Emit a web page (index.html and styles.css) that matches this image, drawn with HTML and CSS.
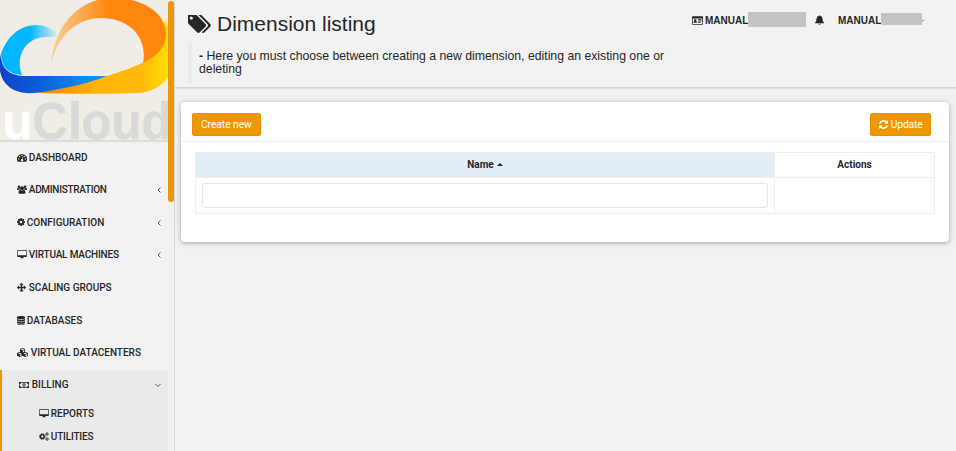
FILE: index.html
```html
<!DOCTYPE html>
<html lang="en">
<head>
<meta charset="utf-8">
<title>uCloud - Dimension listing</title>
<link rel="stylesheet" href="styles.css">
</head>
<body>
<svg class="defs" width="0" height="0">
  <symbol id="desktop" viewBox="0 0 1920 1792"><path d="M1792 992v-832q0-13-9.5-22.5t-22.5-9.500h-1600q-13 0-22.500 9.500t-9.500 22.500v832q0 13 9.500 22.500t22.500 9.500h1600q13 0 22.500-9.500t9.500-22.500zm128-832v1088q0 66-47 113t-113 47h-544q0 37 16 77.500t32 71 16 43.500q0 26-19 45t-45 19h-512q-26 0-45-19t-19-45q0-14 16-44t32-70 16-78h-544q-66 0-113-47t-47-113v-1088q0-66 47-113t113-47h1600q66 0 113 47t47 113z"/></symbol>
  <symbol id="cog" viewBox="128 128 1536 1536"><path d="M1152 896q0-106-75-181t-181-75-181 75-75 181 75 181 181 75 181-75 75-181zm512-109v222q0 12-8 23t-20 13l-185 28q-19 54-39 91 35 50 107 138 10 12 10 25t-9 23q-27 37-99 108t-94 71q-12 0-26-9l-138-108q-44 23-91 38-16 136-29 186-7 28-36 28h-222q-14 0-24.500-8.500t-11.500-21.500l-28-184q-49-16-90-37l-141 107q-10 9-25 9-14 0-25-11-126-114-165-168-7-10-7-23 0-12 8-23 15-21 51-66.500t54-70.500q-27-50-41-99l-183-27q-13-2-21-12.500t-8-23.500v-222q0-12 8-23t19-13l186-28q14-46 39-92-40-57-107-138-10-12-10-24 0-10 9-23 26-36 98.500-107.500t94.500-71.500q13 0 26 10l138 107q44-23 91-38 16-136 29-186 7-28 36-28h222q14 0 24.500 8.500t11.500 21.500l28 184q49 16 90 37l142-107q9-9 24-9 13 0 25 10 129 119 165 170 7 8 7 22 0 12-8 23-15 21-51 66.500t-54 70.500q26 50 41 98l183 28q13 2 21 12.500t8 23.500z"/></symbol>
  <symbol id="tags" viewBox="0 192 1835 1452"><path d="M384 448q0-53-37.500-90.500t-90.500-37.500-90.500 37.500-37.500 90.500 37.500 90.500 90.500 37.500 90.500-37.500 37.500-90.500zm1067 576q0 53-37 90l-491 492q-39 37-91 37-53 0-90-37l-715-716q-38-37-64.500-101t-26.500-117v-416q0-52 38-90t90-38h416q53 0 117 26.500t102 64.500l715 714q37 39 37 91zm384 0q0 53-37 90l-491 492q-39 37-91 37-36 0-59-14t-53-45l470-470q37-37 37-90 0-52-37-91l-715-714q-38-38-102-64.500t-117-26.500h224q53 0 117 26.500t102 64.500l715 714q37 39 37 91z"/></symbol>
  <symbol id="refresh" viewBox="128 128 1536 1536"><path d="M1639 1056q0 5-1 7-64 268-268 434.500t-478 166.500q-146 0-282.500-55t-243.500-157l-129 129q-19 19-45 19t-45-19-19-45v-448q0-26 19-45t45-19h448q26 0 45 19t19 45-19 45l-137 137q71 66 161 102t187 36q134 0 250-65t186-179q11-17 53-117 8-23 30-23h192q13 0 22.500 9.500t9.500 22.500zm25-800v448q0 26-19 45t-45 19h-448q-26 0-45-19t-19-45 19-45l138-138q-148-137-349-137-134 0-250 65t-186 179q-11 17-53 117-8 23-30 23h-199q-13 0-22.500-9.500t-9.500-22.500v-7q65-268 270-434.500t480-166.500q146 0 284 55.500t245 156.500l130-129q19-19 45-19t45 19 19 45z"/></symbol>
  <symbol id="gauge" viewBox="0 0 18 15"><path fill-rule="evenodd" d="M9 1a9 9 0 0 0-7.500 14h15A9 9 0 0 0 9 1zM3 8.700a1.200 1.200 0 1 0 .1 2.500 1.200 1.200 0 0 0-.1-2.500zM5 4.500a1.200 1.200 0 1 0 .1 2.500A1.200 1.200 0 0 0 5 4.500zM9 2.700a1.200 1.200 0 1 0 .1 2.500A1.200 1.200 0 0 0 9 2.700zM13 4.500a1.200 1.200 0 1 0 .1 2.500 1.200 1.200 0 0 0-.1-2.500zM15 8.700a1.200 1.200 0 1 0 .1 2.500 1.200 1.200 0 0 0-.1-2.500zM10.300 6l-1.100 4.300a2 2 0 1 0 1 .3l1.100-4.300z"/></symbol>
  <symbol id="users" viewBox="0 0 20 17"><circle cx="10" cy="6" r="4"/><circle cx="4" cy="3" r="2.600"/><circle cx="16" cy="3" r="2.600"/><path d="M6 9q-3 1-3 6 0 2 2.500 2h9q2.500 0 2.500-2 0-5-3-6-4 3-8 0zM0 8.500Q0 5 1.500 5q2 1.500 3.700.7Q5 8 6 9H3Q0 10 0 8.500zM20 8.500Q20 5 18.500 5q-2 1.500-3.700.7Q15 8 14 9h3q3 1 3-.5z"/></symbol>
  <symbol id="arrows" viewBox="0 0 18 18"><path d="M9 0l3.500 3.700H10V8h4.300V5.500L18 9l-3.700 3.500V10H10v4.300h2.500L9 18l-3.500-3.700H8V10H3.700v2.500L0 9l3.700-3.500V8H8V3.700H5.500z" stroke="currentColor" stroke-width=".8"/></symbol>
  <symbol id="database" viewBox="0 0 16 18"><path d="M0 2.500C0-.7 16-.7 16 2.500V4c0 3.300-16 3.300-16 0zM0 6q8 4 16 0v2.500c0 3.300-16 3.300-16 0zM0 10.500q8 4 16 0V13c0 3.300-16 3.300-16 0zM0 15q8 4 16 0v.5c0 3.300-16 3.300-16 0z"/></symbol>
  <symbol id="cubes" viewBox="0 0 22 18"><path fill-rule="evenodd" d="M11 0l5 2v5.500l6 2.500v5.500L16.500 18 11 15.700 5.500 18 0 15.500V10l6-2.500V2zM7.500 3l3.500 1.500L14.500 3 11 1.700zM11.700 5.700v3.200l3-1.300V4.400zM2 10.800l3.500 1.500L9 10.800 5.500 9.400zM6.200 13.500v3l3-1.300v-3.100zM13 10.800l3.500 1.500 3.500-1.500-3.500-1.400zM17.200 13.500v3l3-1.300v-3.100z"/></symbol>
  <symbol id="money" viewBox="0 0 20 14"><path fill-rule="evenodd" d="M0 1h20v12H0zM4 2.400a2.700 2.700 0 0 1-2.600 2.600v4A2.700 2.700 0 0 1 4 11.600h12A2.700 2.700 0 0 1 18.600 9V5A2.700 2.700 0 0 1 16 2.400z"/><path fill-rule="evenodd" d="M10 3c-4 0-4 8 0 8s4-8 0-8zm-.6 1.700h1.300v3.600h1v1H8.400v-1h1V6.200h-1z"/></symbol>
  <symbol id="cogs" viewBox="0 0 20 18"><g fill="none" stroke="currentColor"><circle cx="6.500" cy="9" r="3.800" stroke-width="3"/><circle cx="6.500" cy="9" r="5.700" stroke-width="1.600" stroke-dasharray="2.400 2.080"/><circle cx="16" cy="4" r="2" stroke-width="1.700"/><circle cx="16" cy="4" r="3.300" stroke-width="1" stroke-dasharray="1.500 1.090"/><circle cx="16" cy="14" r="2" stroke-width="1.700"/><circle cx="16" cy="14" r="3.300" stroke-width="1" stroke-dasharray="1.500 1.090"/></g></symbol>
  <symbol id="card" viewBox="0 0 22 17"><path fill-rule="evenodd" d="M1.500 0h19Q22 0 22 1.500v14q0 1.500-1.500 1.500h-19Q0 17 0 15.500v-14Q0 0 1.500 0zM1.500 4.500v10.800h19V4.500zM3 13q0-3 1.700-3.500-1.800-4 1.800-4t1.800 4Q10 10 10 13zM12 6h7v1.800h-7zM12 8.800h7v1.600h-7zM12 11.500h5V13h-5z"/></symbol>
  <symbol id="bell" viewBox="0 0 18 19"><path d="M8 1q1-2 2 0 5 1 5 6 0 6 3 8v1H0v-1q3-2 3-8 0-5 5-6zM6.700 17h4.600Q11 19 9 19t-2.300-2z"/></symbol>
  <symbol id="left" viewBox="0 0 6 8"><path d="M4.500 1.500L2 4l2.500 2.500" fill="none" stroke="currentColor"/></symbol>
  <symbol id="down" viewBox="0 0 8 6"><path d="M1.500 2L4 4.500 6.500 2" fill="none" stroke="currentColor"/></symbol>
</svg>
<div class="app">
  <aside class="sidebar">
    <div class="logo">
      <svg width="168" height="141" viewBox="0 0 168 141">
        <defs>
          <linearGradient id="cyan"><stop offset=".5" stop-color="#00b7ff"/><stop offset="1" stop-color="#f0ede6"/></linearGradient>
          <linearGradient id="orange"><stop offset="0" stop-color="#f8d09a"/><stop offset=".5" stop-color="#ff870e"/></linearGradient>
          <linearGradient id="blue"><stop offset="0" stop-color="#1042c8"/><stop offset=".3" stop-color="#0b58d5"/><stop offset="1" stop-color="#0ba0f6"/></linearGradient>
          <linearGradient id="gold"><stop offset="0" stop-color="#ff7900"/><stop offset=".48" stop-color="#ffb508"/><stop offset=".8" stop-color="#ffb90c"/><stop offset="1" stop-color="#ffe000"/></linearGradient>
        </defs>
        <path fill="url(#gold)" d="M35 93C67 87 119 75 144 62c15-8 22-25 20-42 4 4 5 10 5 17v39c-6 9-18 17-32 17-28 1-68 1-102 0z"/>
        <path fill="url(#blue)" d="M1 54c0 14 7 22 26 22l80 0C91 83 54 91 34 93 8 95-5 78 1 54z"/>
        <path fill="url(#cyan)" d="M59 35C51 28 45 25 37 25 19 25 7 37 1 54c1 12 6 20 21 21-7-18 3-38 24-38 5 0 9 0 13-2z"/>
        <path fill="url(#orange)" d="M51 66C53 26 79-2 113-2c30 0 53 15 53 36 0 13-9 22-23 29 5-26-14-45-42-45-27 0-46 22-50 48z"/>
        <text x="2.500" y="139" class="logo-text" textLength="169" lengthAdjust="spacingAndGlyphs"><tspan class="logo-u">u</tspan>Cloud</text>
      </svg>
    </div>
    <nav class="nav">
      <a class="item"><svg class="i" width="10" height="9"><use href="#gauge"/></svg><span>DASHBOARD</span></a>
      <a class="item"><svg class="i" width="10" height="9"><use href="#users"/></svg><span class="tighter">ADMINISTRATION</span><svg class="chev" width="6" height="8"><use href="#left"/></svg></a>
      <a class="item"><svg class="i" width="8" height="8"><use href="#cog"/></svg><span>CONFIGURATION</span><svg class="chev" width="6" height="8"><use href="#left"/></svg></a>
      <a class="item"><svg class="i" width="10" height="9"><use href="#desktop"/></svg><span class="tight">VIRTUAL MACHINES</span><svg class="chev" width="6" height="8"><use href="#left"/></svg></a>
      <a class="item"><svg class="i" width="9" height="9"><use href="#arrows"/></svg><span class="wide">SCALING GROUPS</span></a>
      <a class="item"><svg class="i" width="8" height="9"><use href="#database"/></svg><span>DATABASES</span></a>
      <a class="item"><svg class="i" width="11" height="9"><use href="#cubes"/></svg><span class="wide">VIRTUAL DATACENTERS</span></a>
      <div class="group">
        <a class="item"><svg class="i" width="10" height="8"><use href="#money"/></svg><span class="wide">BILLING</span><svg class="chev" width="8" height="6"><use href="#down"/></svg></a>
        <a class="sub"><svg class="i" width="10" height="9"><use href="#desktop"/></svg><span>REPORTS</span></a>
        <a class="sub"><svg class="i" width="10" height="9"><use href="#cogs"/></svg><span class="tight">UTILITIES</span></a>
      </div>
    </nav>
  </aside>
  <div class="track"><div class="thumb"></div></div>
  <main class="main">
    <header class="header">
      <div class="heading">
        <h1><svg width="23" height="18"><use href="#tags"/></svg>Dimension listing</h1>
        <p class="note"><b>-</b> Here you must choose between creating a new dimension, editing an existing one or deleting</p>
      </div>
      <div class="user">
        <svg width="11" height="9"><use href="#card"/></svg><span class="name">MANUAL</span><span class="mask"></span>
        <svg class="bell" width="9" height="10"><use href="#bell"/></svg>
        <span class="account">MANUAL</span><span class="mask small"></span><svg class="tick" width="2" height="3" viewBox="0 0 2 3"><path d="M0 2.500L2 .5" stroke="#555"/></svg>
      </div>
    </header>
    <section class="card">
      <div class="toolbar">
        <button class="btn">Create new</button>
        <button class="btn update"><svg width="9" height="9"><use href="#refresh"/></svg>Update</button>
      </div>
      <table>
        <thead><tr><th class="sorted">Name<svg class="caret" width="6" height="3" viewBox="0 0 6 3"><path d="M0 3l3-3 3 3z"/></svg></th><th class="actions">Actions</th></tr></thead>
        <tbody><tr><td><input type="text"></td><td></td></tr></tbody>
      </table>
    </section>
  </main>
</div>
</body>
</html>
```
FILE: styles.css
```css
* { box-sizing: border-box; }
body { margin: 0; background: #f2f2f2; color: #262626; font-family: Roboto, sans-serif; font-size: 10px; overflow: hidden; }
.defs { position: absolute; }
svg { fill: currentColor; flex: none; display: block; }
.app { display: flex; height: 451px; }
.sidebar { width: 168px; flex: none; overflow: hidden; }
.logo { height: 142px; background: #f0ede6; border-bottom: 2px solid #dedcd9; overflow: hidden; }
.logo-text { font: bold 52px "Liberation Sans", sans-serif; fill: #d9d9da; stroke: #d9d9da; stroke-width: .5px; }
.logo-u { fill: #fff; stroke: #fff; }
.nav { font-weight: 500; padding-top: .5px; }
.item { display: flex; align-items: center; height: 32.600px; padding: 0 6px 0 16.500px; }
.nav > .item:first-child { height: 31.500px; }
.item span, .sub span { margin-left: 2.300px; white-space: nowrap; line-height: 12px; }
.item .wide { margin-left: 3.300px; }
.item .tighter { letter-spacing: -.3px; }
.item .tight, .sub .tight { letter-spacing: -.18px; }
.i { margin-top: -1px; }
.chev { margin-left: auto; color: #555; }
.group { height: 90px; background: #eaeaea; border-left: 2px solid #ec9706; }
.group .item { height: 31.500px; }
.sub { display: flex; align-items: center; height: 22px; padding-left: 36.500px; }
.group .item + .sub { height: 25px; }
.track { width: 6px; flex: none; padding-top: 1px; }
.thumb { height: 201px; background: #ec9706; border-radius: 3px; }
.main { flex: 1; min-width: 0; background: #f2f2f2; border-left: 1px solid #dadada; }
.header { display: flex; height: 88px; background: #f2f2f2; border-bottom: 1px solid #d3d3d3; box-shadow: 0 1px 1px #dfdfdf; font-family: "Liberation Sans", sans-serif; }
.heading { width: 502px; padding: 12px 0 0 13px; flex: none; }
h1 { display: flex; align-items: center; gap: 6px; margin: 0; font-size: 21px; line-height: 24px; font-weight: 400; }
.note { margin: 6px 0 0; border-left: 4px solid #eaeaea; padding: 8px 0 7px 7px; font-size: 12.250px; line-height: 13px; height: 41px; }
.user { display: flex; align-items: center; height: 40px; padding-left: 15px; font-weight: 700; }
.name { margin-left: 2px; }
.name, .account { width: 43px; flex: none; }
.mask { width: 58px; height: 15px; background: #c3c3c3; margin-top: -2px; }
.bell { margin: 0 14px 0 9px; }
.small { width: 41px; height: 12px; }
.card { height: 140px; margin: 14px 7px 0 6px; background: #fff; border-radius: 4px; box-shadow: 0 1px 4px rgba(0,0,0,.3), 0 0 18px rgba(0,0,0,.05); }
.toolbar { display: flex; justify-content: space-between; height: 40px; padding: 11px 18px 0 11px; border-bottom: 1px solid #eee; }
.btn { display: flex; align-items: center; gap: 2px; height: 23px; border: 1px solid #e98e00; border-radius: 2px; background: #ec9706; color: #fff; padding: 0 8px; font: 10.250px Roboto, sans-serif; letter-spacing: -.05px; }
.update { gap: 3px; letter-spacing: -.15px; padding: 0 7.500px 0 8px; }
table { width: 740px; margin: 10px 0 0 14px; border-collapse: collapse; table-layout: fixed; }
th, td { border: 1px solid #eee; padding: 0 6px; }
th { height: 25px; padding-bottom: 2px; font-weight: 700; }
td { height: 36px; }
.sorted { background: #e1eef6; }
.actions { width: 160px; }
.caret { display: inline-block; margin-left: 3px; vertical-align: 1.500px; }
input { display: block; width: 100%; height: 25px; border: 1px solid #e5e5e5; border-radius: 3px; background: #fff; }
```
